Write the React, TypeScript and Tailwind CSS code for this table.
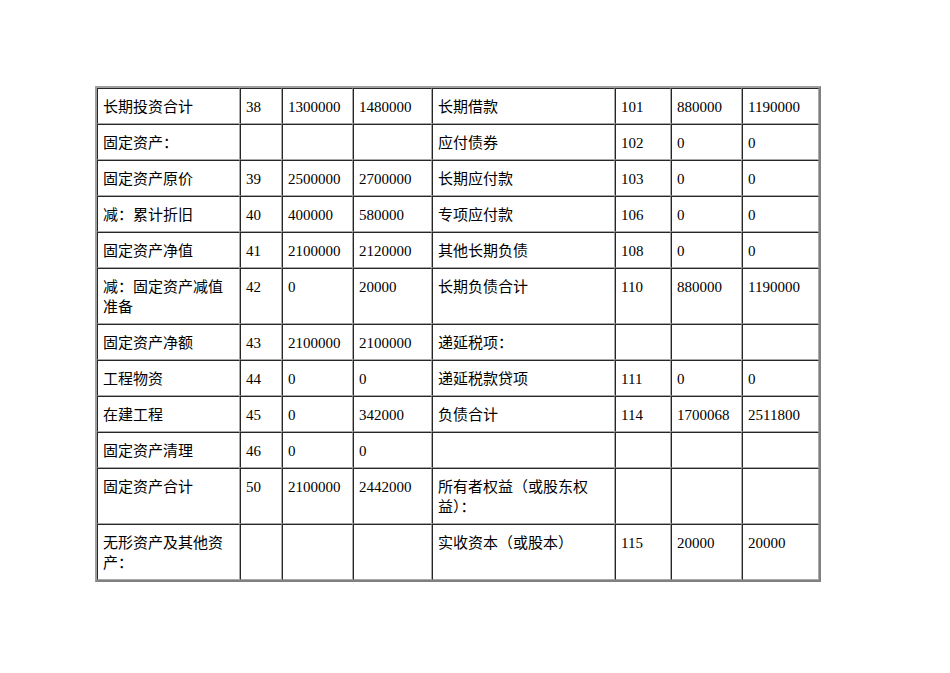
const rows: string[][] = [
  ["长期投资合计", "38", "1300000", "1480000", "长期借款", "101", "880000", "1190000"],
  ["固定资产：", "", "", "", "应付债券", "102", "0", "0"],
  ["固定资产原价", "39", "2500000", "2700000", "长期应付款", "103", "0", "0"],
  ["减：累计折旧", "40", "400000", "580000", "专项应付款", "106", "0", "0"],
  ["固定资产净值", "41", "2100000", "2120000", "其他长期负债", "108", "0", "0"],
  ["减：固定资产减值准备", "42", "0", "20000", "长期负债合计", "110", "880000", "1190000"],
  ["固定资产净额", "43", "2100000", "2100000", "递延税项：", "", "", ""],
  ["工程物资", "44", "0", "0", "递延税款贷项", "111", "0", "0"],
  ["在建工程", "45", "0", "342000", "负债合计", "114", "1700068", "2511800"],
  ["固定资产清理", "46", "0", "0", "", "", "", ""],
  ["固定资产合计", "50", "2100000", "2442000", "所有者权益（或股东权益）：", "", "", ""],
  ["无形资产及其他资产：", "", "", "", "实收资本（或股本）", "115", "20000", "20000"],
];

// column widths, px, measured off the sheet
const colClasses = [
  "w-[143px]",
  "w-[42px]",
  "w-[71px]",
  "w-[79px]",
  "w-[183px]",
  "w-[56px]",
  "w-[71px]",
  "w-[77px]",
];

export default function App() {
  return (
    <div className="min-h-[673px] w-[950px] bg-white pl-[95px] pt-[86px]">
      <table className="table-fixed border-separate border-spacing-0 border-2 border-t-[#a0a0a0] border-l-[#a0a0a0] border-r-[#808080] border-b-[#808080] font-['Liberation_Serif','Noto_Sans_CJK_SC',serif] text-[15px] leading-[20px] text-black">
        <colgroup>
          {colClasses.map((c, i) => (
            <col key={i} className={c} />
          ))}
        </colgroup>
        <tbody>
          {rows.map((r, ri) => (
            <tr key={ri}>
              {r.map((c, ci) => (
                <td
                  key={ci}
                  className="border border-t-[#262626] border-l-[#262626] border-r-[#a8a8a8] border-b-[#a8a8a8] px-[5px] pt-[8px] pb-[6px] align-top"
                >
                  {c || "\u00a0"}
                </td>
              ))}
            </tr>
          ))}
        </tbody>
      </table>
    </div>
  );
}
